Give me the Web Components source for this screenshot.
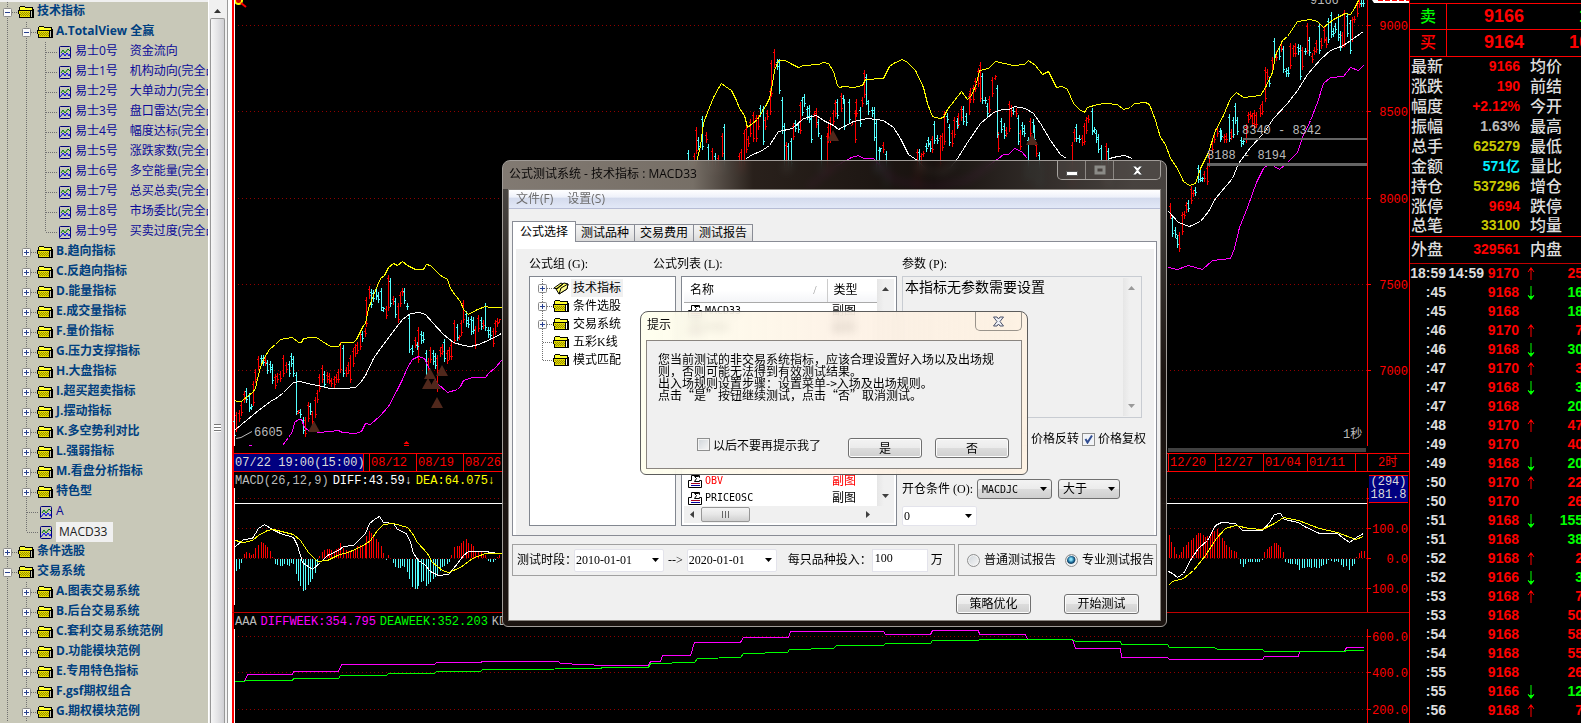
<!DOCTYPE html>
<html lang="zh-CN">
<head>
<meta charset="utf-8">
<title>公式测试系统</title>
<style>
  html, body { height: 100%; margin: 0; }
  body {
    background: #000;
    font: 12px/16px "Open Sans", "Noto Sans CJK SC", sans-serif;
    overflow: hidden;
  }
</style>
</head>
<body>
<trade-desk>
  <formula-tree slot="tree"></formula-tree>
  <chart-board slot="chart"></chart-board>
  <quote-board slot="quote"></quote-board>
  <glass-window slot="window" class="tester" tone="dark" caption="公式测试系统 - 技术指标 : MACD33">
    <test-form></test-form>
  </glass-window>
  <glass-window slot="window" class="prompt" tone="light" caption="提示">
    <prompt-form></prompt-form>
  </glass-window>
</trade-desk>

<script>
class BaseElement extends HTMLElement {
  constructor() {
    super();
    const shadow = this.attachShadow({ mode: 'open' });
    const template = document.createElement('template');
    template.innerHTML = this.render();
    shadow.appendChild(template.content.cloneNode(true));
  }
}

// look of the buttons, drop-downs and tick boxes, shared by both forms
const controls = `
  * { box-sizing: border-box; }
  button, select, input, textarea { font: inherit; color: #000; margin: 0; }
  button.push {
    width: 75px;
    height: 20px;
    padding: 0;
    border: 1px solid #707070;
    border-radius: 3px;
    background: linear-gradient(#f3f3f3, #ebebeb 50%, #dcdcdc 51%, #cfcfcf);
    box-shadow: inset 0 0 0 1px #fcfcfc;
    line-height: 16px;
  }
  select {
    appearance: none;
    height: 20px;
    padding: 0 4px;
    border: 1px solid #707070;
    border-radius: 3px;
    background: url("data:image/svg+xml,%3Csvg xmlns='http://www.w3.org/2000/svg' width='7' height='4'%3E%3Cpath d='M0 0h7L3.5 4z'/%3E%3C/svg%3E") no-repeat right 4px center,
      linear-gradient(#f3f3f3, #ebebeb 50%, #dcdcdc 51%, #cfcfcf);
  }
  select.plain {
    border-color: #e3e3eb;
    border-radius: 2px;
    background: #fff url("data:image/svg+xml,%3Csvg xmlns='http://www.w3.org/2000/svg' width='7' height='4'%3E%3Cpath d='M0 0h7L3.5 4z'/%3E%3C/svg%3E") no-repeat right 4px center;
    padding: 0 1px;
  }
  input[type=checkbox], input[type=radio] {
    appearance: none;
    flex: none;
    width: 13px;
    height: 13px;
    border: 1px solid #8e8f8f;
    background: linear-gradient(135deg, #cfd5da, #f7f7f7);
    box-shadow: inset 0 0 0 1px #f4f4f4;
  }
  input[type=radio] { border-radius: 50%; }
  input[type=checkbox]:checked {
    background: url("data:image/svg+xml,%3Csvg xmlns='http://www.w3.org/2000/svg' width='11' height='11'%3E%3Cpath d='M2.500 5l2 3.500L9 1.500' fill='none' stroke='%23304c90' stroke-width='2'/%3E%3C/svg%3E") no-repeat center, #f0f3f8;
  }
  input[type=radio]:checked {
    background: radial-gradient(circle at 45% 40%, #8fe0f8 0 1px, #1b6d9a 3px, #123f63 4px, #e8eef2 5px);
  }
`;

class TradeDesk extends BaseElement {
  render() {
    return `
      <style>
        :host { display: flex; position: relative; height: 100vh; overflow: hidden; }
        ::slotted([slot=tree]) { flex: none; width: 232px; }
        ::slotted([slot=chart]) { flex: 1; min-width: 0; }
        ::slotted([slot=quote]) { flex: none; width: 172px; }
        ::slotted([slot=window]) { position: absolute; }
        ::slotted(.tester) { left: 502px; top: 160px; width: 665px; }
        ::slotted(.prompt) { left: 640px; top: 311px; width: 388px; }
      </style>
      <slot name="tree"></slot>
      <slot name="chart"></slot>
      <slot name="quote"></slot>
      <slot name="window"></slot>
    `;
  }
}

const treeIcons = {
  folder: `<svg width="16" height="12" viewBox="0 0 16 12" shape-rendering="crispEdges">
    <path d="M2 1h5v1h7v3H2z" fill="#ffff30"/>
    <path d="M1 5h12v6H1z" fill="#e4dc00"/>
    <path d="M2 6h1M4 6h1M6 6h1M8 6h1M10 6h1M3 7h1M5 7h1M7 7h1M9 7h1M11 7h1M2 8h1M4 8h1M6 8h1M8 8h1M10 8h1M3 9h1M5 9h1M7 9h1M9 9h1M11 9h1" transform="translate(0 .5)" stroke="#968e00"/>
    <path d="M1.500 5V1.500L2.500 .5h4l1 1h7v10M.5 4.500h12v7H1.500zM12.500 4.500l2 0M14.500 3v9M1 11.500h14" fill="none" stroke="#000"/>
    <path d="M15.500 3v9" stroke="#000"/></svg>`,
  open: `<svg width="16" height="13" viewBox="0 0 16 13">
    <path d="M1 6l7-5 2 1-6 5zM3 7l8-6 4 1-1 5-8 5z" fill="#ffff66" stroke="#000"/>
    <path d="M6 12l2-6 7-4-1 5z" fill="#fffb90" stroke="#000"/></svg>`,
  leaf: `<svg width="13" height="14" viewBox="0 0 13 14">
    <rect x=".5" y=".5" width="11" height="12" rx="1" fill="none" stroke="#00007a"/>
    <path d="M2 7l2-3 2 3 3-4 2 2" fill="none" stroke="#007a00"/>
    <path d="M1 11l3-4 2 3 2-3 2 3 1-2" fill="none" stroke="#0000e8"/></svg>`
};

// one glyph of the guides column: | passes, t and l branch, + and - carry a box
function guide(kind) {
  const dots = 'stroke="#707070" stroke-dasharray="1 1" shape-rendering="crispEdges"';
  let out = '';
  if (kind !== ' ') {
    out += `<line x1="7.500" y1="0" x2="7.500" y2="${kind === 'l' ? '50%' : '100%'}" ${dots}/>`;
  }
  if ('tl+-'.includes(kind)) {
    out += `<line x1="8" y1="50%" x2="19" y2="50%" ${dots}/>`;
  }
  if ('+-'.includes(kind)) {
    out += `<svg y="50%" overflow="visible">
      <rect x="3.500" y="-3.500" width="8" height="8" rx="1" fill="#fbfbfb" stroke="#8a8a8a"/>
      <path d="M5 .5h5${kind === '+' ? 'M7.500 -2v5' : ''}" stroke="#27408f"/></svg>`;
  }
  return `<svg class="guide">${out}</svg>`;
}

function treeRows(rows) {
  return rows.map(([guides, icon, label, state = '']) => `
    <li class="${icon} ${state}">${[...guides].map(guide).join('')}
      ${treeIcons[icon]}<span>${label}</span></li>`).join('');
}

const treeStyle = `
  ul { list-style: none; margin: 0; padding: 0; }
  li { display: flex; align-items: center; white-space: pre; }
  li svg { flex: none; }
  .guide { width: 19px; height: 100%; }
  li > svg:not(.guide) { margin: 0 3px 0 -1px; }
  .leaf > svg:not(.guide) { margin: 2px 3px 0 2px; }
`;

class FormulaTree extends BaseElement {
  render() {
    const folders = list => list.map(name => ['|+', 'folder', name]);
    const signals = ['资金流向', '机构动向(完全凸显)', '大单动力(完全凸显)', '盘口雷达(完全凸显)', '幅度达标(完全凸显)',
      '涨跌家数(完全凸显)', '多空能量(完全凸显)', '总买总卖(完全凸显)', '市场委比(完全凸显)', '买卖过度(完全凸显)'];
    const rows = [
      ['-', 'folder', '技术指标'],
      ['|-', 'folder', 'A.TotalView 全赢'],
      ...signals.map((name, i) => [i === 9 ? '||l' : '||t', 'leaf', `易士${i}号　${name}`]),
      ...folders(['B.趋向指标', 'C.反趋向指标', 'D.能量指标', 'E.成交量指标', 'F.量价指标', 'G.压力支撑指标', 'H.大盘指标',
        'I.超买超卖指标', 'J.摆动指标', 'K.多空势利对比', 'L.强弱指标', 'M.看盘分析指标', '特色型']),
      ['|t', 'leaf', 'A'],
      ['|l', 'leaf', 'MACD33', 'selected'],
      ['+', 'folder', '条件选股'],
      ['-', 'folder', '交易系统'],
      ...folders(['A.图表交易系统', 'B.后台交易系统', 'C.套利交易系统范例', 'D.功能模块范例', 'E.专用特色指标', 'F.gsf期权组合', 'G.期权模块范例'])
    ];
    return `
      <style>
        :host { display: flex; height: 100%; overflow: hidden; background: #f0f0f0; }
        ${treeStyle}
        ul { width: 208px; margin-top: 2px; overflow: hidden; background: #c8c8b8; }
        li { height: 20px; }
        li span { line-height: 18px; margin-bottom: 3px; color: #004080; font-weight: 700; }
        .leaf span { color: #0a0a98; font-weight: 400; }
        .selected span { background: #f0f0f0; color: #222; padding: 1px 6px 1px 3px; margin-bottom: 1px; }
        .bar { display: flex; flex-direction: column; align-items: center; width: 16px; border-left: 1px solid #fff; }
        .bar svg { flex: none; margin: 9px 0 5px; }
        .thumb { flex: 1; width: 13px; display: grid; place-content: center; padding-top: 114px; border: 1px solid #979797; border-bottom: 0; border-radius: 2px 2px 0 0;
          background: linear-gradient(90deg, #f6f6f6, #e4e4e6 50%, #cfcfd3); }
        .thumb i { width: 7px; height: 8px; background: repeating-linear-gradient(#777 0 1px, #fff 1px 3px); }
        .split { flex: 1; margin-left: 2px; border-left: 1px solid #9a9a9a; background: #fdfdfd; }
      </style>
      <ul>${treeRows(rows)}</ul>
      <div class="bar">
        <svg width="7" height="4"><path d="M0 4L3.500 0 7 4z" fill="#333"/></svg>
        <div class="thumb"><i></i></div>
      </div>
      <div class="split"></div>
    `;
  }
}

// Plot pieces. Points are stored on a fine grid: kx, ky units per pixel, from x, y.
const left = { x: 230, y: 240, kx: 3, ky: 3 };
const middle = { x: 600, y: 0, kx: 3, ky: 3 };
const right = { x: 1000, y: 0, kx: 3, ky: 3 };
const lower = { x: 860, y: 390, kx: 2.851, ky: 3 };
const plain = { x: 0, y: 0, kx: 1, ky: 1 };

function curve(grid, color, points) {
  const list = points.split(' ').map(pair => {
    const [x, y] = pair.split(',').map(Number);
    return `${Math.round(grid.x + x / grid.kx) + .5},${Math.round(grid.y + y / grid.ky) + .5}`;
  });
  return `<polyline points="${list.join(' ')}" fill="none" stroke="${color}" shape-rendering="crispEdges"/>`;
}

function candles(grid, data) {
  const paths = { R: '', C: '' };
  for (const item of data.trim().split(/\s+/)) {
    const [, x, kind, top, bottom] = item.match(/(\d+)([RC])(\d+)-(\d+)/);
    const px = Math.round(grid.x + x / grid.kx) + .5;
    const y1 = Math.round(grid.y + top / grid.ky);
    const y2 = Math.round(grid.y + bottom / grid.ky);
    paths[kind] += `M${px} ${y1}V${y2}M${px - 1.5} ${y1 + 3.5}h1M${px + .5} ${y2 - 3.5}h1`;
  }
  return `<g shape-rendering="crispEdges"><path d="${paths.R}" stroke="#ff0000"/><path d="${paths.C}" stroke="#54ffff"/></g>`;
}

function bars(grid, data) {
  const base = 558;
  let up = '', down = '';
  for (const item of data.trim().split(/\s+/)) {
    const [x, v] = item.split(',').map(Number);
    const px = Math.round(grid.x + x / grid.kx) + .5;
    const h = Math.round(Math.abs(v) / grid.ky);
    if (v > 0) up += `M${px} ${base}v${-h}`;
    else down += `M${px} ${base + 1}v${h}`;
  }
  return `<g shape-rendering="crispEdges"><path d="${up}" stroke="#ff0000"/><path d="${down}" stroke="#54ffff"/></g>`;
}

function gridLines(ys) {
  return ys.map(y => `<path d="M234 ${y}.5H1367" stroke="#900000" stroke-dasharray="1 3" shape-rendering="crispEdges"/>
    <path d="M1368 ${y}.5h3" stroke="#f00"/>`).join('');
}

function scaleText(marks) {
  return marks.map(([y, text]) => `<text x="1408" y="${y + 5}" text-anchor="end" fill="#f00">${text}</text>`).join('');
}

const marker = (x, y) => `<path d="M${x} ${y}l6 11h-12z" fill="#50281c"/>`;

const chartStyle = `
  :host { display: block; overflow: hidden; }
  svg { display: block; font: 12px "Liberation Mono", "Noto Sans CJK SC", monospace; }
`;

class PriceChart extends BaseElement {
  render() {
    return `
      <style>${chartStyle}</style>
      <svg width="1177" height="453" viewBox="232 0 1177 453">
        ${gridLines([25, 111, 198, 284, 370])}
        ${candles(left, `13C535-598 19R515-575 28R510-545 34R485-528 42R452-490 49C445-490 56C458-517 64C492-510 70R422-498 76R388-430 84R348-390
          92C346-372 98C346-378 104R350-378 112C360-402 120C362-398 127C372-432 134R402-448 141R400-430 150R392-425 160R345-410 168R365-400
          176C364-410 184C338-382 190C348-410 197C395-525 205R510-522 211C506-533 219C530-582 226R530-590 233R486-545 240C490-524 247R512-555
          254R470-535 262R450-488 268R402-455 275R375-430 283C392-445 290R395-430 297R398-432 304R415-442 311R408-445 318R402-430 325R388-430
          331R305-400 340C314-412 347R380-412 354R365-402 361R345-430 368R325-382 375R312-352 382R305-342 389R272-330 397C272-306 404R265-292
          409R170-262 418R138-178 424C146-205 430C150-185 437C142-180 445C156-188 452C145-212 460C200-216 467R198-236 475R105-212 481C114-200
          488R168-195 496C173-235 503R188-250 509R155-200 516R143-168 523C143-192 530C190-210 538C225-340 545C315-345 554R290-325 560C305-330
          565R262-370 573C272-312 580C275-310 588C330-415 594R355-400 601R320-370 609C330-375 615C340-388 622R345-455 630R320-352 637R312-345
          643C298-365 652R330-372 658R322-360 664R305-360 673R240-312 680C252-302 686R285-300 694R240-288 700R180-248 709C212-260 715C230-265
          722C228-285 730C232-282 736R258-328 745R225-275 752C232-270 758R240-268 766C188-272 773C260-295 779C262-298 788R265-320 794R240-285
          800R235-262 808R236-250`)}
        ${candles(middle, `265C450-500 281R460-500 287R380-462 295C412-450 307C348-450 317R396-430 323C432-520 337R445-520 344C458-520 353R465-520
          365R400-470 373C372-520 417R460-520 423R447-520 431R390-500 437R378-460 444R408-440 451R358-410 458R335-425 467R345-425 473R345-390
          479C315-352 488C318-434 494R350-390 500R330-360 509R265-345 514R180-290 521R148-205 530C178-210 536C178-282 545C290-402 551C370-520
          557R425-520 565C430-520 572C415-500 578R368-420 586C360-395 593C365-400 599R305-402 607C290-348 613C282-322 622C318-360 628C315-370
          634C345-430 643R332-350 649R325-385 655C358-412 664C405-520 680R400-520 685R372-430 691R350-430 700R330-375 706R300-350 712C298-358
          722R280-335 728C285-310 733C300-390 748C298-370 757R365-375 764R330-430 769R298-352 779C322-382 785R290-320 791R210-295 799C222-315
          805C300-345 815C322-350 821C320-422 827C360-520 836C442-520 841C445-455 848R426-460 857C453-560 950R448-560 956C448-520 962R458-520
          970R452-470 977C428-455 983C412-440 991C424-455 997R408-460 1003C362-432 1012C405-432 1019R405-500 1027R400-452 1033R332-435
          1040C338-370 1048C372-437 1055R390-440 1062R352-415 1070C355-388 1075R338-385 1082R318-362 1090C318-375 1097C340-378 1106R280-345
          1111R265-308 1119R255-308 1126R235-275 1133R205-262 1139R186-305 1147C218-312 1155C290-312 1162C310-352 1168R288-340 1175R230-292
          1184R225-240 1190C255-415 1195R395-455 1204C355-400 1211C370-418 1217R380-412 1226R303-395 1233R315-350 1240C320-345 1247R325-350
          1253C345-435 1261R390-450 1267C365-405 1273C375-412 1283C410-540 1289R355-410 1298C358-400 1303C375-430 1309R425-470 1318C455-560`)}
        ${candles(right, `217R425-560 223R388-425 229C372-425 237C405-430 245R405-437 253R370-435 259R352-402 265R345-370 275C324-405 281C380-400
          287C390-428 295C403-460 303C435-500 317R430-560 323C445-560 509R610-658 515C645-712 524C682-715 530C705-745 536R695-755
          545R635-705 551R632-658 557R605-640 565C600-635 572R558-612 578R570-592 586C560-588 593C495-550 601C500-545 607C530-545 613R512-545
          622R495-555 628R460-500 635R420-460 643R395-430 650R378-410 659C385-425 664C390-420 673R402-428 679R398-428 686C343-425 692R388-420
          698C350-415 706C308-372 712C350-405 722C412-440 728C415-435 737R372-430 743R335-370 749R332-358 757R338-382 763R330-385 769R335-385
          779R315-352 785R302-345 794R202-305 800R208-240 806C230-262 815R172-220 821C115-180 829R152-182 836C138-180 842R125-155 848C138-218
          857C205-232 863C200-232 871R128-208 878R135-172 884R130-172 893C132-165 899C135-240 905R140-210 914C145-165 920R68-162 926C112-168
          935R160-190 941R140-165 949R120-158 956C70-162 962R115-148 971R82-130 977R110-145 983C55-128 992C35-115 998C85-110 1005C70-100
          1013C42-122 1019C92-152 1027R95-145 1033R30-140 1040C40-112 1049C60-162 1055R50-125 1061R48-70 1070R5-50 1076R0-25 1084C0-20
          1090C0-20`)}
        ${curve(left, '#ff0', '12,478 18,484 34,484 40,478 66,456 75,445 81,415 90,382 100,356 118,328 135,312 150,298 165,294 185,292 205,306 212,306 218,293 240,290 257,290 275,304 300,318 325,319 333,305 368,307 378,298 388,280 400,255 406,250 415,205 430,165 440,135 450,115 462,106 475,82 488,70 500,74 516,62 530,76 555,88 580,88 588,73 600,76 615,90 630,104 652,118 660,145 675,165 690,182 700,206 715,222 740,208 765,198 780,202 813,202')}
        ${curve(left, '#fff', '15,568 50,536 66,526 84,510 120,484 140,472 160,455 190,426 210,422 230,428 260,434 300,444 345,443 375,440 390,425 405,405 430,355 450,325 485,275 515,237 540,219 568,217 585,222 605,245 640,282 670,306 700,316 720,318 745,312 780,298 813,280')}
        ${curve(left, '#f0f', '157,616 175,590 185,574 192,546 205,536 212,538 222,560 235,569 268,576 325,570 335,576 375,580 392,574 404,550 420,552 450,525 475,498 500,448 516,418 530,380 545,357 565,348 582,354 600,392 620,430 652,457 680,446 690,438 700,420 725,412 765,411 775,398 795,380 813,360')}
        ${curve(middle, '#ff0', '285,500 290,475 300,435 310,370 320,335 340,290 355,265 363,250 375,258 392,270 408,300 416,325 432,345 442,382 470,358 482,335 495,318 508,295 515,250 522,210 535,180 555,180 570,190 593,202 610,194 655,193 670,187 685,188 698,212 712,255 718,262 730,257 760,260 785,254 795,236 850,233 866,198 880,188 905,178 920,185 945,210 970,262 980,310 997,348 1018,355 1030,352 1040,328 1062,300 1082,272 1100,296 1112,285 1128,250 1138,210 1165,204 1185,184 1240,196 1272,192 1284,181 1305,195 1325,222 1345,212')}
        ${curve(middle, '#fff', '438,475 455,462 480,454 508,436 535,394 575,383 610,353 648,346 670,360 700,375 715,386 760,362 800,354 850,360 880,382 900,415 925,462 950,480 980,510 1020,515 1050,500 1072,475 1100,425 1140,370 1180,335 1205,328 1228,327 1243,319 1275,325 1300,340 1320,370 1350,420 1380,462 1398,475')}
        ${curve(middle, '#f0f', '620,560 700,500 754,472 775,466 790,474 820,475 880,540 1000,560 1100,540 1195,475 1210,463 1225,462 1243,445 1262,452 1280,475')}
        ${curve(right, '#ff0', '145,212 168,262 185,257 202,268 220,308 238,328 253,337 262,320 290,312 315,308 350,312 370,326 390,320 402,310 435,305 447,312 465,360 480,410 495,432 510,475 530,505 550,542 568,556 585,550 600,505 625,455 645,390 668,345 690,295 707,275 730,292 780,285 795,260 815,215 825,165 845,120 862,108 890,64 930,58 950,62 968,82 1000,58 1035,38 1050,42 1062,25 1075,0')}
        ${curve(right, '#fff', '328,475 350,468 372,465 396,475')}
        ${curve(right, '#fff', '505,632 535,665 568,677 600,664 625,632 645,595 695,535 715,490 750,440 790,400 820,355 860,310 890,270 920,222 960,178 990,150 1030,135 1060,115 1088,94')}
        ${curve(right, '#f0f', '505,800 530,808 565,794 605,808 635,780 690,774 703,745 718,680 740,620 768,545 790,505 808,490 838,506 860,485 892,455 905,410 930,360 950,305 968,250 990,230 1030,228 1050,202 1075,210 1088,195')}
        <g>${marker(314, 421)}${marker(430, 368)}${marker(442, 365)}${marker(428, 378)}${marker(435, 378)}${marker(437, 397)}${marker(833, 130)}${marker(1032, 134)}</g>
        <path d="M1243 139H1367" stroke="#646464" stroke-width="2"/>
        <path d="M1207 164.500H1367" stroke="#646464" stroke-width="3"/>
        <path d="M1168 450H1366" stroke="#404040" stroke-width="4"/>
        <path d="M236 438.500l5-1 11-6" fill="none" stroke="#bbb"/>
        <path d="M249 445.500h3" stroke="#f0f"/>
        <path d="M406.500 441l3 3h-6zM404 445h5v1h-5z" fill="#f00"/>
        <circle cx="238.500" cy=".5" r="3.500" fill="#c00" stroke="#ff0" stroke-width="2"/>
        <path d="M241 3l5 4" stroke="#f00" stroke-width="2"/>
        <g fill="#bbb">
          <text x="254" y="436">6605</text>
          <text x="1242" y="134">8340 - 8342</text>
          <text x="1207" y="159">8188 - 8194</text>
          <text x="1310" y="4">9166</text>
          <text x="1343" y="438">1秒</text>
        </g>
        <path d="M234.500 0V446" stroke="#fff" shape-rendering="crispEdges"/>
        <path d="M1367.500 0V446" stroke="#f00" shape-rendering="crispEdges"/>
        <path d="M1372 0h37v3h-35z" fill="#fff"/>
        <path d="M1378 .5h31" stroke="#f00" stroke-dasharray="5 2"/>
        ${scaleText([[25, '9000'], [111, '8500'], [198, '8000'], [284, '7500'], [370, '7000']])}
      </svg>
    `;
  }
}

class TimeAxis extends BaseElement {
  render() {
    return `
      <style>
        :host { display: block; }
        div { display: flex; height: 19px; box-sizing: border-box; border-top: 1px solid #f00; border-bottom: 1px solid #f00; color: #f00;
          font: 12px/18px "Liberation Mono", "Noto Sans CJK SC", monospace; white-space: pre; }
        time, span { box-sizing: border-box; width: 47px; padding-left: 1px; border-left: 1px solid #f00; flex: none; }
        time.now { width: 131px; margin-left: 1px; margin-right: 5px; padding-left: 1px; border-right: 1px solid #f00; background: #000080; color: #ddd; overflow: hidden; }
        .gap { flex: 1; }
        time.short { width: 44px; }
        time.last { width: 48px; }
        span.rest { width: 12px; }
        span.unit { width: 42px; padding-left: 10px; }
      </style>
      <div>
        <time class="now">07/22 19:00(15:00)</time>
        <time>08/12</time><time>08/19</time><time>08/26</time>
        <span class="gap"></span>
        <time>12/20</time><time class="last">12/27</time><time class="short">01/04</time><time class="last">01/11</time>
        <span class="rest"></span><span class="unit">2时</span>
      </div>
    `;
  }
}

const legendStyle = `
  p { display: flex; gap: 4px; height: 16px; margin: 0; padding-left: 3px; color: #bbb; white-space: pre;
    font: 12px/18px "Liberation Mono", monospace; }
`;

class MacdChart extends BaseElement {
  render() {
    return `
      <style>
        ${chartStyle}
        ${legendStyle}
        .diff { color: #fff; }
        .dea { color: #ff0; }
      </style>
      <p><span>MACD(26,12,9)</span><span class="diff">DIFF:43.59↓</span><span class="dea">DEA:64.075↓</span></p>
      <svg width="1177" height="124" viewBox="232 488 1177 124">
        ${gridLines([498, 528, 558, 588])}
        ${bars(left, `13,-20 19,-35 27,-30 34,-12 42,12 49,18 56,14 64,8 70,12 76,30 84,38 92,48 98,45 104,40 112,32 120,22 127,3 134,-15 141,-18
          150,-22 155,-20 162,-15 170,-18 176,-20 184,-12 190,-14 197,-45 205,-65 211,-80 219,-95 226,-92 233,-78 240,-70 247,-60 254,-42
          262,-20 268,5 275,18 283,24 290,28 297,28 304,25 311,22 318,26 325,30 331,45 340,30 347,24 354,22 361,18 368,22 375,28 382,35
          389,38 397,38 404,42 409,65 418,80 424,74 430,65 437,58 445,48 452,35 460,15 467,-4 475,10 488,-12 496,-25 503,-28 509,-28
          516,-22 523,-25 530,-40 538,-60 545,-85 554,-90 560,-90 565,-80 573,-70 580,-65 588,-82 594,-75 601,-70 609,-60 615,-55 622,-48
          630,-35 637,-25 643,-20 652,-14 658,-8 664,8 673,32 680,35 686,35 694,46 700,50 709,56 715,46 722,42 730,36 736,22 745,22 752,18
          758,12 766,10 773,-5 779,-8 788,-10 794,-4 800,2 808,10`)}
        ${bars(lower, `882,70 888,48 895,32 902,12 909,10 915,18 922,32 929,38 936,48 943,55 950,60 957,68 963,76 970,74 977,68 984,64 990,66
          997,72 1004,78 1010,80 1017,86 1024,74 1031,60 1037,50 1044,38 1051,32 1058,24 1065,22 1072,18 1084,-15 1091,-24 1098,-14
          1105,-10 1111,-8 1118,-8 1125,-8 1132,-8 1138,-8 1145,-4 1153,18 1159,28 1166,32 1173,36 1179,45 1186,44 1192,38 1198,34 1205,18
          1213,-8 1219,-12 1226,-15 1233,-14 1240,-14 1247,-18 1253,-32 1260,-26 1267,-26 1274,-24 1281,-24 1287,-26 1294,-24 1301,-28
          1308,-26 1315,-22 1321,-18 1328,-14 1335,-2 1342,-6 1350,-8 1357,-6 1364,-10 1371,-18 1378,-24 1385,-22 1395,-34 1402,-22
          1409,-16 1415,4 1422,14 1429,20 1436,22`)}
        ${curve(left, '#fff', '15,918 40,898 66,894 84,864 102,852 125,868 150,880 190,890 202,915 215,965 247,986 270,965 290,945 325,930 340,918 370,914 390,895 405,880 418,850 432,838 446,828 460,845 488,850 500,866 528,878 540,905 550,940 565,960 582,972 600,992 625,1006 655,1002 670,985 680,970 700,945 715,934 765,932 800,940 813,940')}
        ${curve(left, '#ff0', '15,900 40,905 66,899 84,885 110,870 130,868 190,882 210,900 235,935 262,962 290,960 320,945 360,932 400,916 420,900 440,870 460,851 490,850 530,862 545,880 560,905 590,940 605,965 635,990 655,997 690,982 725,954 765,938 813,940')}
        ${curve(lower, '#fff', '878,543 890,550 905,562 920,550 945,505 965,475 990,450 1012,405 1030,397 1070,398 1090,420 1145,419 1165,395 1180,372 1197,368 1210,388 1250,395 1265,408 1310,430 1360,428 1375,440 1395,457 1415,442 1433,430')}
        ${curve(lower, '#ff0', '878,585 890,572 920,565 950,540 985,495 1015,445 1040,415 1070,405 1110,415 1145,417 1180,400 1205,382 1250,390 1310,415 1360,427 1410,446 1433,438')}
        <path d="M234.500 488V605M234 503.500H1367" stroke="#fff" shape-rendering="crispEdges"/>
        <path d="M1367.500 488V612" stroke="#f00" shape-rendering="crispEdges"/>
        ${scaleText([[528, '100.0'], [558, '0.0'], [588, '100.0']])}
      </svg>
    `;
  }
}

class WeekChart extends BaseElement {
  render() {
    return `
      <style>
        ${chartStyle}
        ${legendStyle}
        :host { border-top: 1px solid #c00000; }
        .diff { color: #f0f; }
        .dea { color: #0f0; }
      </style>
      <p><span>AAA</span><span class="diff">DIFFWEEK:354.795</span><span class="dea">DEAWEEK:352.203</span><span>KD</span></p>
      <svg width="1177" height="94" viewBox="232 629 1177 94">
        ${gridLines([636, 672, 709])}
        ${curve(left, '#f0f', '13,1324 42,1324 50,1303 185,1303 190,1294 325,1294 332,1273 612,1273 618,1267 750,1267 757,1264 840,1264')}
        ${curve(plain, '#f0f', '510,661 558,661 560,663 604,665 648,665 650,661 660,661 662,655 690,655 694,642 740,642 743,637 788,637 790,631 860,631')}
        ${curve(lower, '#f0f', '0,724 65,724 72,733 200,733 205,721 335,721 340,733 470,733 475,748 605,748 612,775 740,775 745,802 875,802 882,807 1145,807 1152,799 1248,799 1253,784 1380,784 1385,772 1433,772')}
        ${curve(left, '#0f0', '13,1324 40,1324 48,1321 185,1321 190,1315 325,1315 331,1306 467,1306 474,1300 612,1300 618,1294 750,1294 757,1288 840,1288')}
        ${curve(plain, '#0f0', '510,669 600,668 602,667 648,667 650,663 694,662 697,658 740,657 743,653 787,652 789,649 833,648 836,645 860,645')}
        ${curve(lower, '#0f0', '0,766 65,766 72,760 200,760 205,751 335,751 340,748 605,748 612,754 740,754 745,763 875,763 880,772 1010,772 1018,778 1145,778 1152,784 1380,784 1385,781 1433,781')}
        <path d="M234.500 629V723" stroke="#fff" shape-rendering="crispEdges"/>
        <path d="M1367.500 629V723" stroke="#f00" shape-rendering="crispEdges"/>
        ${scaleText([[636, '600.0'], [672, '400.0'], [709, '200.0']])}
      </svg>
    `;
  }
}

class ChartBoard extends BaseElement {
  render() {
    return `
      <style>
        :host { display: flex; flex-direction: column; position: relative; box-sizing: border-box; background: #000; overflow: hidden;
          box-shadow: inset 2px 0 0 #f00; }
        price-chart { flex: 1; min-height: 0; }
        macd-chart { flex: none; height: 140px; }
        week-chart { flex: none; height: 110px; }
        output { position: absolute; right: 1px; bottom: 220px; width: 39px; box-sizing: border-box; border-top: 1px solid #f00; border-bottom: 1px solid #f00;
          background: #000080; color: #ddd; text-align: center; font: 12px/13px "Liberation Mono", monospace; }
      </style>
      <price-chart></price-chart>
      <time-axis></time-axis>
      <macd-chart></macd-chart>
      <week-chart></week-chart>
      <output>(294) 181.8</output>
    `;
  }
}

class QuoteBoard extends BaseElement {
  render() {
    const quotes = [
      ['最新', '9166', 'r', '均价'], ['涨跌', '190', 'r', '前结'], ['幅度', '+2.12%', 'r', '今开'],
      ['振幅', '1.63%', 'w', '最高'], ['总手', '625279', 'y', '最低'], ['金额', '571亿', 'c', '量比'],
      ['持仓', '537296', 'y', '增仓'], ['涨停', '9694', 'r', '跌停'], ['总笔', '33100', 'y', '均量']
    ];
    const ticks = `18:59 9170 u 25r|:45 9168 d 16g|:45 9168 - 18g|:46 9170 u 7r|:46 9168 d 30g|:47 9170 u 3r|:47 9168 d 3g|:47 9168 - 20g
      |:48 9170 u 47r|:49 9170 - 40r|:49 9168 d 20g|:50 9170 u 22r|:50 9170 - 26r|:51 9168 d 155g|:51 9168 - 38g|:52 9168 u 2r|:52 9166 d 3g
      |:53 9168 u 7r|:53 9168 - 50r|:54 9168 - 58r|:54 9168 - 55r|:55 9168 - 26r|:55 9166 d 12g|:56 9168 u 7r`.split('|').map(t => t.trim().split(' '));
    const arrow = {
      u: '<svg width="8" height="14"><path d="M4 13V1M1 5l3-4 3 4" fill="none" stroke="#f00"/><path d="M4 0l2 3H2z" fill="#f00"/></svg>',
      d: '<svg width="8" height="14"><path d="M4 0v12M1 9l3 4 3-4" fill="none" stroke="#0f0"/><path d="M4 14l3-4H1z" fill="#0f0"/></svg>',
      '-': ''
    };
    const quoteRow = ([name, value, tone, next]) => `<tr><th>${name}</th><td class="${tone}">${value}</td><th>${next}</th></tr>`;
    return `
      <style>
        :host { display: block; box-sizing: border-box; height: 100%; border-left: 1px solid #f00; padding-top: 3px; overflow: hidden; background: #000;
          color: #ddd; font: bold 14px/19px "Liberation Sans", "Noto Sans CJK SC", sans-serif; }
        table { border-collapse: collapse; table-layout: fixed; width: 173px; }
        td, th { padding: 0; white-space: nowrap; text-align: right; }
        .r { color: #f00; } .g { color: #0f0; } .y { color: #c8c800; } .c { color: #00f0ff; } .w { color: #bbb; }
        .deal { width: 179px; font-size: 18px; }
        .deal tr { height: 26px; border-top: 1px solid #f00; }
        .deal th { width: 36px; border-right: 1px solid #f00; text-align: center; font-size: 16px; font-weight: 500; }
        .deal td:nth-child(2) { width: 77px; }
        .quote { border-top: 1px solid #f00; }
        .quote tr { height: 20px; }
        .quote th { width: 37px; padding-left: 1px; font-size: 16px; font-weight: 500; text-align: left; }
        .quote th:last-child { width: 53px; padding-left: 10px; }
        .quote tbody:last-child { border-top: 1px solid #f00; }
        .quote tbody:last-child tr { height: 27px; }
        .ticks { border-top: 1px solid #c00000; }
        .ticks tr { height: 19px; }
        .ticks td:nth-child(1) { width: 36px; }
        .ticks td:nth-child(2) { width: 38px; }
        .ticks td:nth-child(3) { width: 35px; }
        .ticks td:nth-child(4) { width: 24px; text-align: center; }
        svg { display: block; margin: 0 auto; }
      </style>
      <table class="deal">
        <tr><th class="g">卖</th><td class="r">9166</td><td class="g">1</td></tr>
        <tr><th class="r">买</th><td class="r">9164</td><td class="r">10</td></tr>
      </table>
      <table class="quote">
        <tbody>${quotes.map(quoteRow).join('')}</tbody>
        <tbody>${quoteRow(['外盘', '329561', 'r', '内盘'])}</tbody>
      </table>
      <table class="ticks">
        ${ticks.map(([time, price, dir, vol], i) => `<tr><td>${time}</td><td>${i ? '' : '14:59'}</td><td class="r">${price}</td>
          <td>${arrow[dir]}</td><td class="${vol.slice(-1)}">${vol.slice(0, -1)}</td></tr>`).join('')}
      </table>
    `;
  }
}

class GlassWindow extends BaseElement {
  render() {
    const small = this.getAttribute('tone') === 'light';
    const cross = (fill, stroke) => `<svg width="13" height="11" viewBox="0 0 13 11"><path d="M1.500 1h3.500l1.500 2 1.500-2h3.500l-3.500 4.500 3.500 4.500h-3.500l-1.500-2-1.500 2h-3.500l3.500-4.500z" fill="${fill}" stroke="${stroke}"/></svg>`;
    const buttons = small
      ? `<button aria-label="关闭">${cross('#eef0f6', '#4a5068')}</button>`
      : `<button aria-label="最小化"><svg width="12" height="11"><path d="M.5 6.500h11v4H.5z" fill="#fff" stroke="#555"/></svg></button>
        <button aria-label="最大化" disabled><svg width="12" height="11"><path d="M2 2h8v6H2z" fill="none" stroke="#8b8b87" stroke-width="3"/></svg></button>
        <button aria-label="关闭" class="close">${cross('#fff', '#444')}</button>`;
    return `
      <style>
        :host { display: block; box-sizing: border-box; padding: 0 5px 5px; border: 1px solid #a19c98; border-radius: 8px 8px 6px 6px;
          backdrop-filter: blur(4px);
          background: linear-gradient(90deg, rgba(136, 128, 120, .95), rgba(125, 117, 108, .95) 190px, rgba(48, 38, 32, .85) 250px, rgba(32, 24, 20, .75) 65%, rgba(84, 78, 74, .85) 95%) 0 0 / 100% 28px no-repeat,
            linear-gradient(rgba(80, 76, 72, .9), rgba(30, 22, 18, .9) 40%) 0 28px / 100% 100% no-repeat; }
        :host([tone=light]) { border-color: #5c5c5c; background: linear-gradient(90deg, rgba(255, 255, 236, .85), rgba(253, 240, 226, .8) 50%, rgba(253, 241, 226, .95)); }
        header { display: flex; justify-content: space-between; height: 28px; color: #0a0808; font-size: 12px; line-height: 26px; white-space: pre; }
        h1 { margin: 0; font: inherit; padding-left: 1px; }
        nav { display: flex; height: 18px; border: 1px solid #a8a4a0; border-top: 0; border-radius: 0 0 5px 5px; overflow: hidden; }
        :host([tone=light]) nav { border-color: #9a948c; }
        button { display: grid; place-content: center; width: 28px; padding: 0; border: 0; border-right: 1px solid #8c8884; background: rgba(90, 84, 80, .35); }
        button.close { width: 46px; }
        button:last-child { border-right: 0; }
        :host([tone=light]) button { width: 45px; background: none; }
        section { border: 1px solid #8a8580; background: #f0f0f0; overflow: hidden; }
      </style>
      <header><h1>${this.getAttribute('caption')}</h1><nav>${buttons}</nav></header>
      <section><slot></slot></section>
    `;
  }
}

class ScrollBar extends BaseElement {
  render() {
    return `
      <style>
        :host { display: flex; flex-direction: column; justify-content: space-between; align-items: center; box-sizing: border-box; width: 17px; padding: 8px 0;
          background: linear-gradient(90deg, #e6e6e6, #f0f0f0 40%); color: #404040; }
        svg { display: block; fill: currentColor; }
      </style>
      <svg width="7" height="4"><path d="M0 4L3.500 0 7 4z"/></svg>
      <svg width="7" height="4"><path d="M0 0h7L3.500 4z"/></svg>
    `;
  }
}

class TestForm extends BaseElement {
  render() {
    const sigma = `<svg width="14" height="14" viewBox="0 0 14 14"><path d="M.5 13.500v-7h3v-5h8v2l-1-1h-4l2 2-2 3h5v-1h2v7z" fill="#fff" stroke="#000"/>
      <path d="M3 9.500h9" stroke="#a00020"/><path d="M3 11.500h9" stroke="#0000a0"/></svg>`;
    const formulas = ['MACD33', 'MIKE', '', '', '', '', '', '', '', '', 'OBV', 'PRICEOSC'];
    return `
      <style>
        ${controls}
        ${treeStyle}
        :host { display: block; font: 12px/16px "Liberation Serif", "Noto Sans CJK SC", serif; color: #000; white-space: nowrap; }
        .menu { display: flex; gap: 14px; height: 19px; padding-left: 7px; border-bottom: 1px solid #b6bcd4;
          background: linear-gradient(#fff, #eef1fa 40%, #d4dbed 45%, #e2e8f7); font: 12px/18px "Open Sans", "Noto Sans CJK SC", sans-serif; }
        .menu button { padding: 0; border: 0; background: none; color: #6d6d6d; }
        main { display: flex; flex-direction: column; padding: 12px 3px 6px; }
        .tabs { display: flex; align-items: flex-end; height: 21px; margin-bottom: -1px; z-index: 1; }
        .tabs button { height: 18px; width: 59px; padding: 0; border: 1px solid #898c95; border-left-width: 0; background: linear-gradient(#f3f3f3, #eaeaea 50%, #dadada); line-height: 16px; }
        .tabs button.on { width: 64px; height: 21px; border-left-width: 1px; border-bottom: 0; background: #fff; }
        .sheet { border: 1px solid #898c95; background: #fff; padding: 7px 2px 0 3px; }
        .columns { display: grid; grid-template-columns: 147px 216px 1fr; gap: 5px; padding: 0 12px 9px 13px; background: #f0f0f0; }
        .column { display: flex; flex-direction: column; min-width: 0; }
        h2 { margin: 0; height: 27px; font: inherit; line-height: 30px; }
        .formulas h2 { margin-left: -28px; }
        .groups { flex: 1; border: 1px solid #828790; background: #fff; padding: 2px 5px; }
        .groups li { height: 18px; }
        .groups li span { padding: 0 2px; margin-left: -1px; line-height: 18px; }
        .groups li:first-child span { background: #f0f0f0; }
        .list { flex: 1; display: grid; grid-template-columns: 1fr 17px; grid-template-rows: 1fr 17px; border: 1px solid #828790; padding: 2px; background: #fff; }
        .list table { width: 100%; border-collapse: collapse; table-layout: fixed; align-self: start; }
        .list th { height: 23px; padding: 0 0 0 6px; border-right: 1px solid #ccc; border-bottom: 1px solid #aaa; text-align: left; font-weight: 400; background: linear-gradient(#fff, #fff 50%, #f4f5f8); }
        .list th:first-child { width: 143px; padding-right: 10px; }
        .list th:last-child { border-right: 0; }
        .list th b { float: right; font-weight: 400; color: #999; }
        .list td { height: 17px; padding: 0 0 0 5px; }
        .list td:first-child { font: 10px/14px "DejaVu Sans Mono", monospace; padding-left: 4px; }
        .list td svg { vertical-align: middle; margin: -2px 3px -2px 0; }
        .red { color: #f00; }
        .hbar { grid-column: 1 / 3; display: flex; align-items: center; gap: 7px; padding: 0 24px 0 6px; background: #f0f0f0; }
        .hbar i { width: 49px; height: 15px; margin-right: auto; border: 1px solid #979797; border-radius: 2px;
          background: repeating-linear-gradient(90deg, #666 0 1px, transparent 1px 3px) center / 8px 7px no-repeat, linear-gradient(#f4f4f4, #e6e6e6 50%, #d0d0d0); }
        .params { display: grid; grid-template-columns: 1fr 17px; height: 142px; border: 1px solid #c8ccd2; padding: 1px; }
        .params scroll-bar { color: #999; height: 100%; }
        textarea { display: block; border: 0; padding: 0 1px; resize: none; background: #f0f0f0; color: #000; font: 14px/16px "Noto Sans CJK SC", sans-serif; overflow: hidden; }
        .checks { display: flex; align-items: center; gap: 3px; height: 14px; margin-top: 14px; padding-left: 113px; }
        .condition { display: flex; align-items: center; margin: 33px 0 7px; }
        .condition label { width: 75px; }
        .condition select { width: 75px; font: 10px "DejaVu Sans Mono", "Noto Sans CJK SC", monospace; margin-right: 6px; }
        .condition select:last-child { width: 62px; font-size: 12px; }
        .value { width: 75px; height: 20px; }
        .boxes { display: flex; gap: 3px; margin-top: 8px; }
        fieldset { display: flex; align-items: center; min-width: 0; height: 32px; margin: 0; padding: 0 4px; border: 1px solid #a0a0a0; }
        fieldset:first-child { flex: 1; }
        fieldset select.plain { width: 90px; height: 23px; }
        fieldset > span { padding: 0 4px; }
        .from { width: 57px; }
        .amount { margin-left: 11px; width: 84px; }
        #amount { width: 56px; height: 23px; margin-right: 3px; padding: 0 2px 4px; border: 1px solid #e3e3eb; background: #fff; }
        .report { width: 199px; padding: 0 0 0 8px; gap: 4px; }
        .report label + input { margin-left: 5px; }
        footer { display: flex; justify-content: flex-end; gap: 33px; margin: 18px 18px 0 0; }
      </style>
      <div class="menu"><button>文件(F)</button><button>设置(S)</button></div>
      <main>
        <div class="tabs">
          <button class="on">公式选择</button><button>测试品种</button><button>交易费用</button><button>测试报告</button>
        </div>
        <div class="sheet">
          <div class="columns">
            <div class="column">
              <h2>公式组 (G):</h2>
              <ul class="groups">${treeRows([['+', 'open', '技术指标'], ['+', 'folder', '条件选股'], ['+', 'folder', '交易系统'], ['t', 'folder', '五彩K线'], ['l', 'folder', '模式匹配']])}</ul>
            </div>
            <div class="column formulas">
              <h2>公式列表 (L):</h2>
              <div class="list">
                <table>
                  <tr><th>名称<b>/</b></th><th>类型</th></tr>
                  ${formulas.map(name => `<tr class="${name === 'OBV' ? 'red' : ''}"><td>${name && sigma + name}</td><td>${name && '副图'}</td></tr>`).join('')}
                </table>
                <scroll-bar></scroll-bar>
                <div class="hbar">
                  <svg width="4" height="7"><path d="M4 0v7L0 3.500z" fill="#404040"/></svg><i></i>
                  <svg width="4" height="7"><path d="M0 0v7l4-3.500z" fill="#404040"/></svg>
                </div>
              </div>
            </div>
            <div class="column">
              <h2><label for="params">参数 (P):</label></h2>
              <div class="params"><textarea id="params" readonly>本指标无参数需要设置</textarea><scroll-bar></scroll-bar></div>
              <div class="checks">
                <input type="checkbox" id="reverse"><label for="reverse">价格反转</label>
                <input type="checkbox" id="adjust" checked><label for="adjust">价格复权</label>
              </div>
              <div class="condition">
                <label for="open">开仓条件 (O):</label>
                <select id="open"><option>MACDJC</option></select>
                <select aria-label="比较"><option>大于</option></select>
              </div>
              <select class="plain value" aria-label="数值"><option>0</option></select>
            </div>
          </div>
        </div>
        <div class="boxes">
          <fieldset>
            <label for="from" class="from">测试时段：</label>
            <select class="plain" id="from"><option>2010-01-01</option></select>
            <span>--&gt;</span>
            <select class="plain" id="to" aria-label="结束日期"><option>2020-01-01</option></select>
            <label for="amount" class="amount">每只品种投入：</label><input id="amount" value="100"><label for="amount">万</label>
          </fieldset>
          <fieldset class="report">
            <input type="radio" name="report" id="simple"><label for="simple">普通测试报告</label>
            <input type="radio" name="report" id="pro" checked><label for="pro">专业测试报告</label>
          </fieldset>
        </div>
        <footer><button class="push">策略优化</button><button class="push">开始测试</button></footer>
      </main>
    `;
  }
}

class PromptForm extends BaseElement {
  render() {
    return `
      <style>
        ${controls}
        :host { display: block; padding: 12px 12px 10px 11px; color: #000; font: 12px/12px "Noto Sans CJK SC", sans-serif; white-space: nowrap; }
        p { margin: 0 0 37px; }
        form { display: flex; align-items: flex-start; padding-left: 39px; }
        label { margin: -1px auto 0 3px; line-height: 16px; }
        button.push { width: 74px; margin-left: 13px; }
      </style>
      <p>您当前测试的非交易系统指标，应该合理设置好入场以及出场规<br>则，否则可能无法得到有效测试结果。<br>出入场规则设置步骤：设置菜单-&gt;入场及出场规则。<br>点击“是”按钮继续测试，点击“否”取消测试。</p>
      <form>
        <input type="checkbox" id="mute"><label for="mute">以后不要再提示我了</label>
        <button type="button" class="push">是</button><button type="button" class="push">否</button>
      </form>
    `;
  }
}

customElements.define('scroll-bar', ScrollBar);
customElements.define('formula-tree', FormulaTree);
customElements.define('price-chart', PriceChart);
customElements.define('time-axis', TimeAxis);
customElements.define('macd-chart', MacdChart);
customElements.define('week-chart', WeekChart);
customElements.define('chart-board', ChartBoard);
customElements.define('quote-board', QuoteBoard);
customElements.define('test-form', TestForm);
customElements.define('prompt-form', PromptForm);
customElements.define('glass-window', GlassWindow);
customElements.define('trade-desk', TradeDesk);
</script>
</body>
</html>
